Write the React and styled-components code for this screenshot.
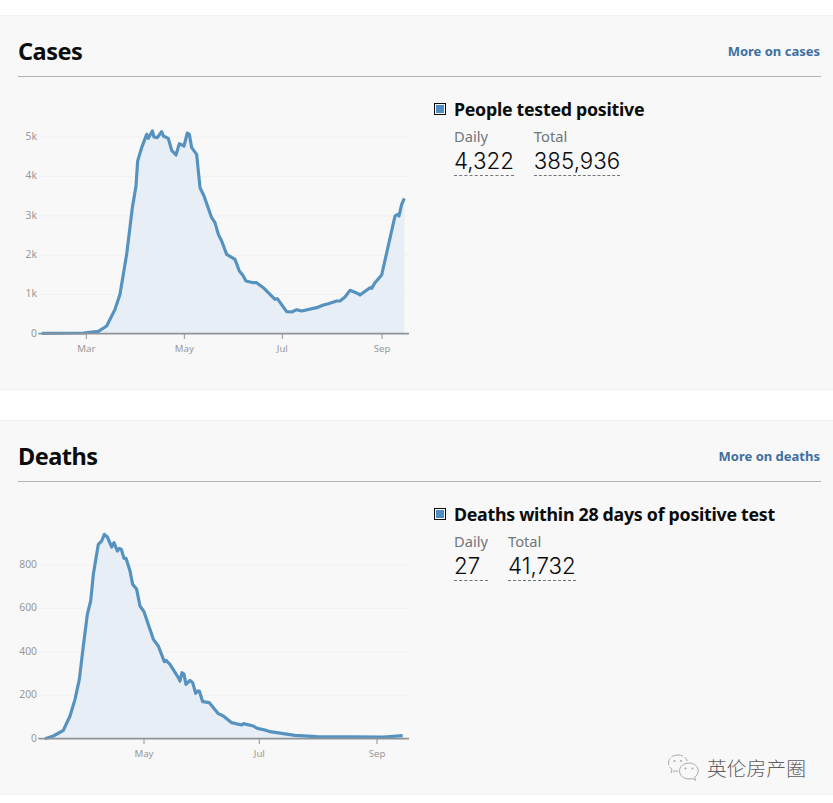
import React from "react";
import styled, { createGlobalStyle } from "styled-components";

const Global = createGlobalStyle`
  html, body { margin: 0; padding: 0; background: #fff; }
  body { font-family: "Noto Sans", "Liberation Sans", sans-serif; color: #0b0c0c; }
`;

const Page = styled.div`
  position: relative;
  width: 833px;
  height: 803px;
  overflow: hidden;
  padding-top: 15px;
  box-sizing: border-box;
  display: flex;
  flex-direction: column;
  gap: 30px;
`;

const Card = styled.section`
  height: 375px;
  box-sizing: border-box;
  background: #f8f8f8;
  border-top: 1px solid #f2f2f2;
  border-bottom: 1px solid #f0f0f0;
  padding: 0 12px 0 18px;
`;

const Header = styled.header`
  height: 61px;
  box-sizing: border-box;
  border-bottom: 1px solid #b1b4b6;
  display: flex;
  justify-content: space-between;
  align-items: center;
  padding-top: 9px;
`;

const Title = styled.h2`
  margin: 0;
  font-size: 23.5px;
  letter-spacing: -0.5px;
  line-height: 30px;
  font-weight: 700;
  color: #0b0c0c;
`;

const MoreLink = styled.a`
  font-size: 13px;
  font-weight: 700;
  color: #3f6f9f;
  text-decoration: none;
  margin-right: 1px;
`;

const Body = styled.div`
  display: grid;
  grid-template-columns: 416px 1fr;
`;

const ChartSvg = styled.svg`
  display: block;
  width: 420px;
  height: 270px;
  margin: 23.7px 0 0 -18px;
`;

const Panel = styled.div`
  padding-top: 20px;
`;

const Legend = styled.div`
  display: flex;
  align-items: center;
  gap: 8px;
  height: 24px;
`;

const Swatch = styled.span`
  width: 12px;
  height: 12px;
  box-sizing: border-box;
  background: #4f8cc2;
  border: 1px solid #0b0c0c;
  box-shadow: inset 0 0 0 1px #f8f8f8;
  flex: none;
`;

const LegendText = styled.div`
  font-size: 17.8px;
  letter-spacing: -0.28px;
  font-weight: 700;
  color: #0b0c0c;
  white-space: nowrap;
`;

const Stats = styled.div`
  display: flex;
  gap: 20px;
  margin: 5px 0 0 20px;
`;

const Stat = styled.div`
  display: flex;
  flex-direction: column;
`;

const StatLabel = styled.div`
  font-size: 14.7px;
  line-height: 21px;
  color: #6f777b;
`;

const StatValue = styled.div`
  font-family: "Inter", "Noto Sans", sans-serif;
  font-size: 22.3px;
  font-weight: 300;
  line-height: 28px;
  color: #0b0c0c;
  border-bottom: 1px dashed #6f777b;
`;

const Watermark = styled.div`
  position: absolute;
  left: 667px;
  top: 752px;
  display: flex;
  align-items: center;
  gap: 6px;
`;

const WatermarkText = styled.span`
  font-family: "Noto Sans CJK SC", sans-serif;
  font-size: 19.8px;
  font-weight: 300;
  color: #5f5f5f;
`;

const cases = [[125,997],[250,996],[295,991],[320,975],[345,925],[360,880],[380,760],[397,620],[408,555],[413,480],[425,440],[440,400],[445,412],[457,390],[462,408],[472,410],[485,392],[490,405],[505,412],[515,448],[528,462],[538,428],[552,435],[562,396],[568,400],[575,440],[590,460],[600,560],[612,585],[635,650],[645,665],[655,700],[665,720],[680,760],[705,775],[718,810],[728,822],[738,840],[750,843],[760,845],[770,845],[790,860],[825,895],[832,893],[860,932],[875,933],[890,926],[905,930],[950,920],[970,912],[985,908],[1010,900],[1020,900],[1035,888],[1050,868],[1075,878],[1080,882],[1110,860],[1115,862],[1125,845],[1145,822],[1185,645],[1193,640],[1197,645],[1205,610],[1213,592]];

const deaths = [[135,1013],[160,1005],[190,988],[210,945],[225,895],[238,835],[250,735],[262,640],[272,600],[280,520],[295,430],[305,420],[313,400],[322,408],[335,438],[342,425],[352,450],[358,442],[364,445],[372,472],[378,472],[390,510],[398,550],[410,565],[420,615],[432,632],[460,715],[475,735],[493,782],[498,778],[510,790],[535,830],[540,840],[546,815],[552,820],[558,850],[570,838],[578,845],[587,877],[592,870],[598,870],[608,902],[628,905],[655,938],[670,945],[695,965],[725,972],[730,968],[760,975],[772,982],[795,987],[810,992],[885,1003],[950,1007],[1150,1008],[1208,1004]];

function Chart({ data, base, top, yTicks, xTicks }) {
  const line = data.map((p) => p.join(",")).join(" ");
  const area = `${data[0][0]},${base} ${line} ${data[data.length - 1][0]},${base}`;
  return (
    <ChartSvg viewBox={`0 ${top} 1260 810`}>
      {yTicks.slice(1).map(([label, y]) => (
        <line key={label} x1="115" x2="1225" y1={y} y2={y} stroke="#f1f1f1" strokeWidth="3" />
      ))}
      <polygon points={area} fill="#e8eef5" />
      <polyline points={line} fill="none" stroke="#5692bf" strokeWidth="9.500" strokeLinejoin="round" />
      <line x1="115" x2="1227" y1={base} y2={base} stroke="#8d9499" strokeWidth="5" />
      {yTicks.map(([label, y]) => (
        <text key={label} x="111" y={y + 9} textAnchor="end" fontSize="31" fill="#999999" fontFamily="Noto Sans, sans-serif">{label}</text>
      ))}
      {xTicks.map(([label, x]) => (
        <g key={label}>
          <line x1={x} x2={x} y1={base} y2={base + 16} stroke="#8d9499" strokeWidth="3" />
          <text x={x} y={base + 55} textAnchor="middle" fontSize="29" fill="#999999" fontFamily="Noto Sans, sans-serif">{label}</text>
        </g>
      ))}
    </ChartSvg>
  );
}

function Section({ title, link, legend, daily, total, chart }) {
  return (
    <Card>
      <Header>
        <Title>{title}</Title>
        <MoreLink href="#">{link}</MoreLink>
      </Header>
      <Body>
        <Chart {...chart} />
        <Panel>
          <Legend>
            <Swatch />
            <LegendText>{legend}</LegendText>
          </Legend>
          <Stats>
            <Stat>
              <StatLabel>Daily</StatLabel>
              <StatValue>{daily}</StatValue>
            </Stat>
            <Stat>
              <StatLabel>Total</StatLabel>
              <StatValue>{total}</StatValue>
            </Stat>
          </Stats>
        </Panel>
      </Body>
    </Card>
  );
}

export default function App() {
  return (
    <Page>
      <Global />
      <Section
        title="Cases"
        link="More on cases"
        legend="People tested positive"
        daily="4,322"
        total="385,936"
        chart={{
          data: cases,
          base: 998,
          top: 300,
          yTicks: [["0", 998], ["1k", 880], ["2k", 763], ["3k", 645], ["4k", 526], ["5k", 408]],
          xTicks: [["Mar", 259], ["May", 553], ["Jul", 847], ["Sep", 1146]],
        }}
      />
      <Section
        title="Deaths"
        link="More on deaths"
        legend="Deaths within 28 days of positive test"
        daily="27"
        total="41,732"
        chart={{
          data: deaths,
          base: 1013,
          top: 315,
          yTicks: [["0", 1013], ["200", 883], ["400", 753], ["600", 622], ["800", 493]],
          xTicks: [["May", 432], ["Jul", 778], ["Sep", 1131]],
        }}
      />
      <Watermark>
        <svg width="34" height="30" viewBox="0 0 34 30" fill="none" stroke="#a8a8a8" strokeWidth="1">
          <path d="M11 3C5.500 3 1.500 6.500 1.500 11c0 2.700 1.300 4.800 3.500 6.300L4 21l4-2.200c1 .3 2 .4 3 .4" strokeDasharray="7 2" />
          <path d="M11 3c4.500 0 8.300 2.300 9.300 6" strokeDasharray="5 2" />
          <path d="M22 11c-5.300 0-9.500 3.500-9.500 8s4.200 8 9.500 8c1.100 0 2.200-.2 3.200-.5l3.300 1.800-.9-3c2.300-1.500 3.600-3.800 3.600-6.300 0-4.500-4.200-8-9-8z" />
          <circle cx="7.500" cy="9" r="1" fill="#a8a8a8" stroke="none" />
          <circle cx="14" cy="9" r="1" fill="#a8a8a8" stroke="none" />
          <circle cx="18.500" cy="16.500" r="1" fill="#a8a8a8" stroke="none" />
          <circle cx="25.500" cy="16.500" r="1" fill="#a8a8a8" stroke="none" />
        </svg>
        <WatermarkText>英伦房产圈</WatermarkText>
      </Watermark>
    </Page>
  );
}
